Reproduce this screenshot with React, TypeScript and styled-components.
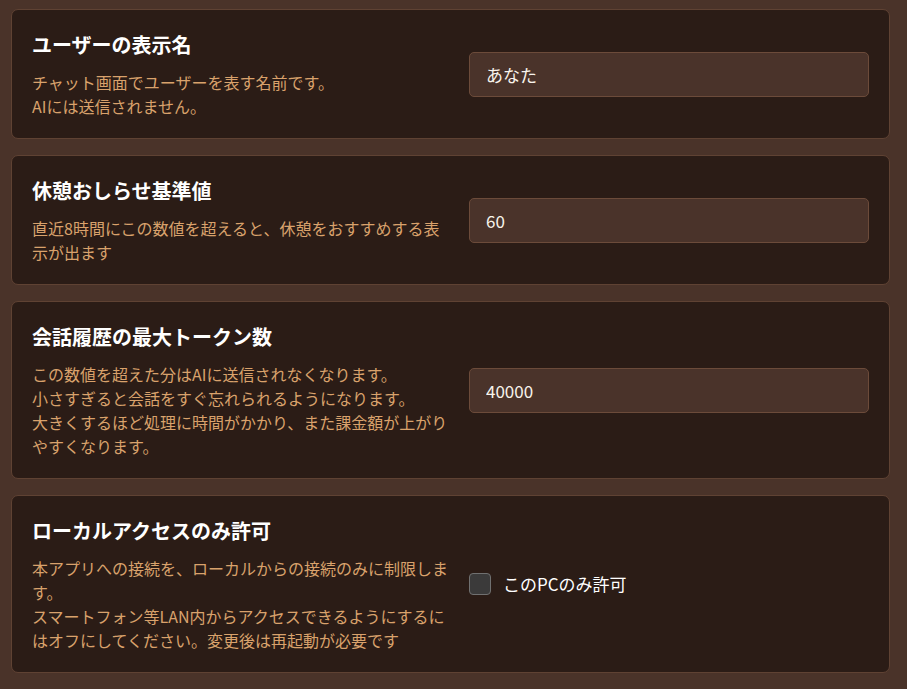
import React, { useState } from "react";
import styled, { createGlobalStyle } from "styled-components";

const GlobalStyle = createGlobalStyle`
  html, body {
    margin: 0;
    padding: 0;
    background: #4a3329;
  }
  body {
    font-family: "Noto Sans CJK JP", "Noto Sans", sans-serif;
  }
  * { box-sizing: border-box; }
`;

const Page = styled.div`
  display: flex;
  flex-direction: column;
  gap: 16px;
  padding: 9px 17px 16px 11px;
  min-height: 689px;
  background: #4a3329;
`;

const Card = styled.section`
  display: flex;
  align-items: center;
  gap: 16px;
  padding: 20px;
  background: #2b1c16;
  border: 1px solid #5f4233;
  border-radius: 7px;
`;

const Info = styled.div`
  flex: 1;
  min-width: 0;
  display: flex;
  flex-direction: column;
  gap: 10px;
`;

const Title = styled.h3`
  margin: 0;
  font-size: 20px;
  line-height: 30px;
  font-weight: 700;
  color: #ffffff;
`;

const Desc = styled.p`
  margin: 0;
  font-size: 16px;
  line-height: 24px;
  color: #d9a26c;
  white-space: pre-line;
`;

const Control = styled.div`
  flex: 0 0 400px;
  display: flex;
  align-items: center;
`;

const TextInput = styled.input`
  width: 100%;
  height: 45px;
  padding: 0 16px;
  background: #4a332a;
  border: 1px solid #6c4b3a;
  border-radius: 5px;
  color: #f8f3ec;
  font-family: "Noto Sans CJK JP", "Noto Sans", sans-serif;
  font-size: 17px;
  outline: none;
`;

const CheckLabel = styled.label`
  display: flex;
  align-items: center;
  gap: 12px;
  color: #ffffff;
  font-size: 17px;
  line-height: 24px;
  cursor: pointer;
`;

const Box = styled.input`
  appearance: none;
  margin: 0;
  width: 22px;
  height: 22px;
  background: #3b3a3a;
  border: 1.5px solid #707070;
  border-radius: 4px;
  cursor: pointer;
  &:checked {
    background: #d9a26c;
  }
`;

type Setting = {
  title: string;
  desc: string;
  kind: "text" | "check";
  value?: string;
  label?: string;
};

const settings: Setting[] = [
  {
    title: "ユーザーの表示名",
    desc: "チャット画面でユーザーを表す名前です。\nAIには送信されません。",
    kind: "text",
    value: "あなた",
  },
  {
    title: "休憩おしらせ基準値",
    desc: "直近8時間にこの数値を超えると、休憩をおすすめする表示が出ます",
    kind: "text",
    value: "60",
  },
  {
    title: "会話履歴の最大トークン数",
    desc:
      "この数値を超えた分はAIに送信されなくなります。\n小さすぎると会話をすぐ忘れられるようになります。\n大きくするほど処理に時間がかかり、また課金額が上がりやすくなります。",
    kind: "text",
    value: "40000",
  },
  {
    title: "ローカルアクセスのみ許可",
    desc:
      "本アプリへの接続を、ローカルからの接続のみに制限します。\nスマートフォン等LAN内からアクセスできるようにするにはオフにしてください。変更後は再起動が必要です",
    kind: "check",
    label: "このPCのみ許可",
  },
];

function SettingCard({ s }: { s: Setting }) {
  const [val, setVal] = useState(s.value ?? "");
  const [checked, setChecked] = useState(false);
  return (
    <Card>
      <Info>
        <Title>{s.title}</Title>
        <Desc>{s.desc}</Desc>
      </Info>
      <Control>
        {s.kind === "text" ? (
          <TextInput value={val} onChange={(e) => setVal(e.target.value)} />
        ) : (
          <CheckLabel>
            <Box
              type="checkbox"
              checked={checked}
              onChange={(e) => setChecked(e.target.checked)}
            />
            {s.label}
          </CheckLabel>
        )}
      </Control>
    </Card>
  );
}

export default function App() {
  return (
    <>
      <GlobalStyle />
      <Page>
        {settings.map((s) => (
          <SettingCard key={s.title} s={s} />
        ))}
      </Page>
    </>
  );
}
